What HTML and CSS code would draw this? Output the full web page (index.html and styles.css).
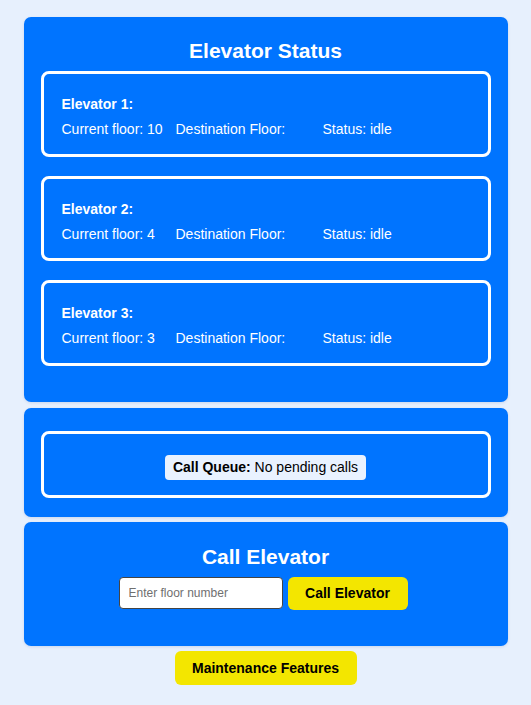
FILE: index.html
```
<!DOCTYPE html>
<html>
<head>
<meta charset="utf-8">
<link rel="stylesheet" href="styles.css">
</head>
<body>
<div class="app">
  <section class="panel status">
    <h2 class="title">Elevator Status</h2>
    <div class="card elev">
      <div class="elev-name">Elevator 1:</div>
      <div class="elev-row">
        <span class="col c1">Current floor: 10</span>
        <span class="col c2">Destination Floor: </span>
        <span class="col">Status: idle</span>
      </div>
    </div>
    <div class="card elev">
      <div class="elev-name">Elevator 2:</div>
      <div class="elev-row">
        <span class="col c1">Current floor: 4</span>
        <span class="col c2">Destination Floor: </span>
        <span class="col">Status: idle</span>
      </div>
    </div>
    <div class="card elev">
      <div class="elev-name">Elevator 3:</div>
      <div class="elev-row">
        <span class="col c1">Current floor: 3</span>
        <span class="col c2">Destination Floor: </span>
        <span class="col">Status: idle</span>
      </div>
    </div>
  </section>
  <section class="panel queue">
    <div class="card queue-card">
      <span class="chip"><b>Call Queue:</b> No pending calls</span>
    </div>
  </section>
  <section class="panel call">
    <h2 class="title call-title">Call Elevator</h2>
    <div class="call-row">
      <input class="floor-input" type="text" placeholder="Enter floor number">
      <button class="btn call-btn">Call Elevator</button>
    </div>
  </section>
  <div class="maint-wrap">
    <button class="btn maint-btn">Maintenance Features</button>
  </div>
</div>
</body>
</html>
```
FILE: styles.css
```
html, body {
  margin: 0;
  padding: 0;
  background: #e7f0fd;
  font-family: "Liberation Sans", Arial, sans-serif;
}
.app {
  width: 484px;
  margin: 17px auto 0;
  display: flex;
  flex-direction: column;
}
.panel {
  background: #0074ff;
  border-radius: 7px;
  color: #fff;
  box-shadow: 0 1px 3px rgba(0, 40, 120, 0.12);
}
.status {
  padding: 16px 17px 17.5px;
}
.title {
  margin: 6px 0 9px;
  font-size: 21px;
  line-height: 23px;
  font-weight: bold;
  text-align: center;
}
.card {
  border: 3px solid #fff;
  border-radius: 8px;
}
.elev {
  height: 85.5px;
  box-sizing: border-box;
  padding: 21px 18px 0;
  margin-bottom: 19px;
  font-size: 14px;
  line-height: 18px;
}
.elev-name {
  font-weight: bold;
}
.elev-row {
  display: flex;
  margin-top: 7px;
}
.c1 { width: 114px; }
.c2 { width: 147px; }
.queue {
  margin-top: 6px;
  padding: 23px 17px 19px;
}
.queue-card {
  padding: 21px 15px 15px;
  text-align: center;
}
.chip {
  display: inline-block;
  background: #e9f2ff;
  color: #000;
  border-radius: 4px;
  padding: 4px 8px;
  font-size: 14px;
  line-height: 17px;
}
.call {
  margin-top: 5px;
  padding: 23px 17px 36px;
}
.call-title {
  margin: 0 0 9px;
}
.call-row {
  display: flex;
  justify-content: center;
  align-items: flex-start;
  gap: 5px;
  padding-right: 5px;
}
.floor-input {
  width: 164px;
  height: 32px;
  box-sizing: border-box;
  border: 1px solid #444;
  border-radius: 4px;
  padding: 0 9px;
  font-family: "Liberation Sans", Arial, sans-serif;
  font-size: 12px;
  background: #fff;
  color: #000;
}
.floor-input::placeholder {
  color: #6f6f6f;
}
.btn {
  background: #f3e600;
  color: #000;
  border: none;
  border-radius: 6px;
  font-family: "Liberation Sans", Arial, sans-serif;
  font-size: 14px;
  font-weight: bold;
  padding: 8px 17px;
  line-height: 17px;
}
.call-btn {
  width: 120px;
  height: 33px;
  padding: 0;
}
.maint-wrap {
  display: flex;
  justify-content: center;
  margin-top: 5px;
}
.maint-btn {
  width: 182px;
  height: 34px;
  padding: 0;
}
```
